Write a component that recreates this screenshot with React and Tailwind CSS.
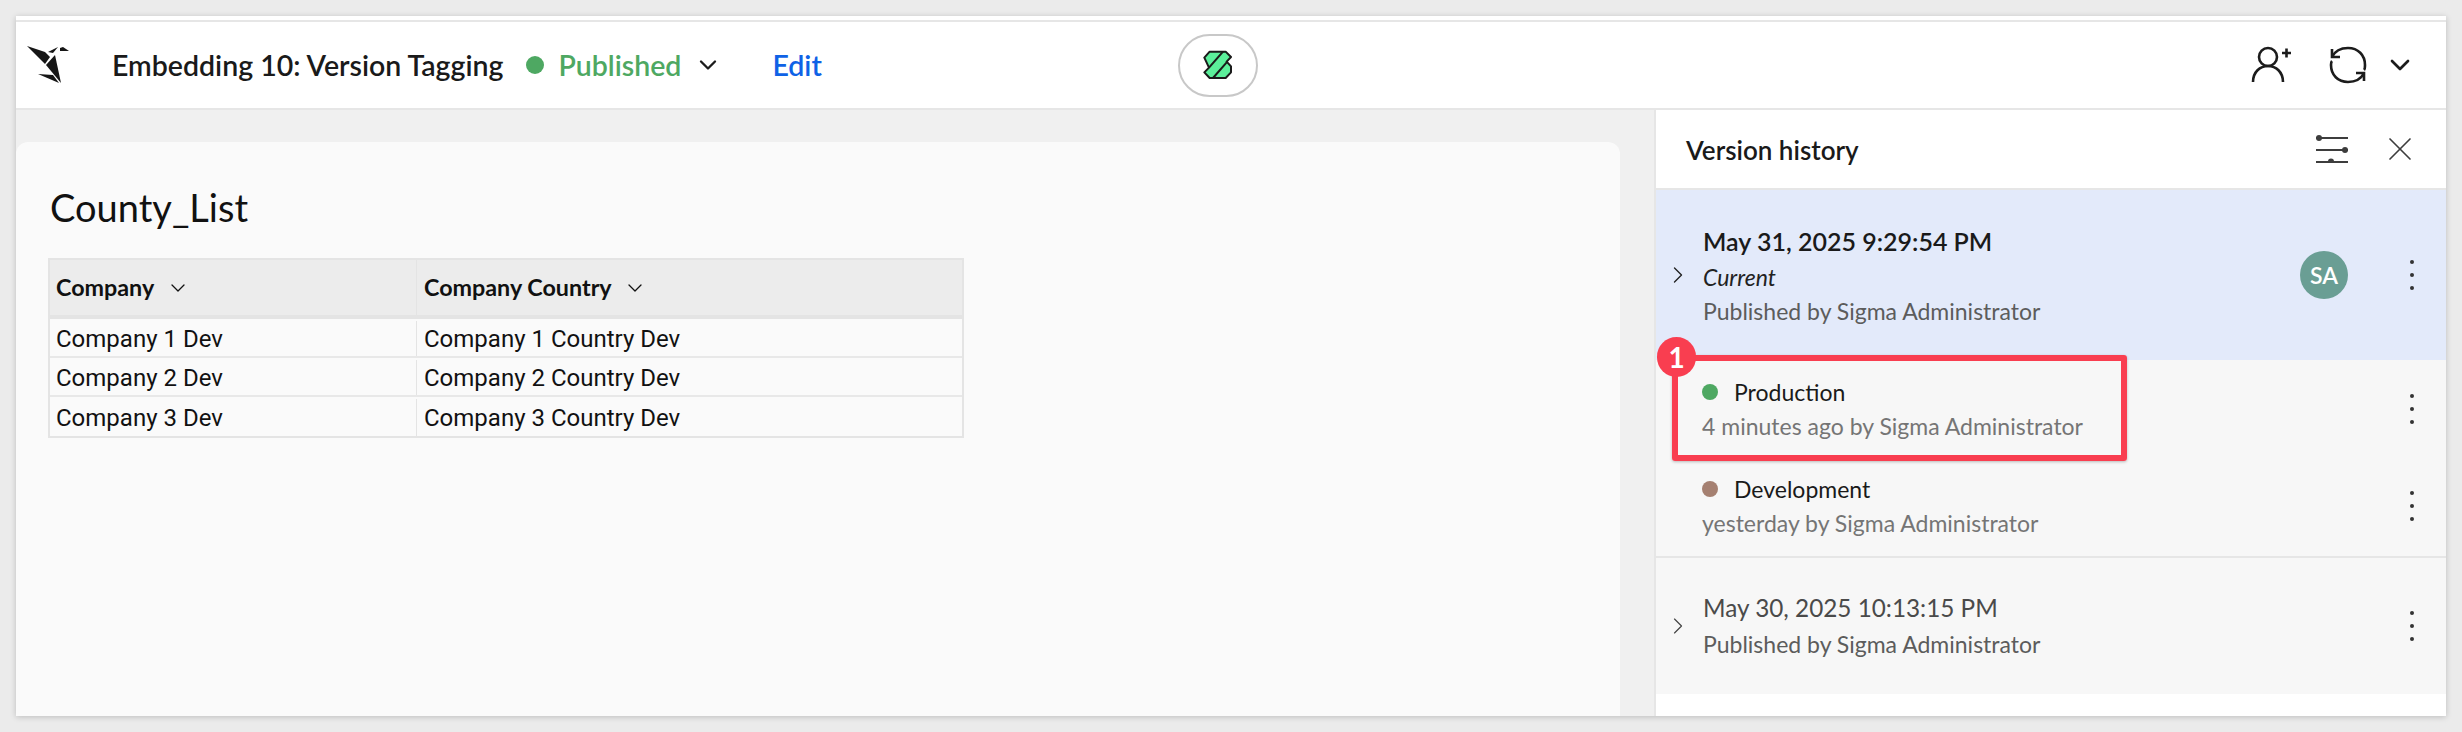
import { ChevronDown, ChevronRight, X } from "lucide-react";

const font = "font-['Lato','Noto_Sans',sans-serif]";

function Logo() {
  return (
    <svg width="48" height="46" viewBox="24 42 48 46" className="shrink-0">
      <g fill="#161616">
        <polygon points="27,46 45,52 50,57 45,64" />
        <polygon points="46,65 55,55 61,83" />
        <polygon points="38,74 53,75 59,83" />
        <polygon points="48,52 58,47 53,53" />
        <polygon points="60,48 63,47 69,51 60,51" />
      </g>
    </svg>
  );
}

function ZigIcon() {
  return (
    <svg width="30" height="32" viewBox="130 92 90 88">
      <polygon
        points="150,96 198,96 214,112 201,126 214,140 214,158 198,175 150,175 134,158 148,144 134,114"
        fill="#5bef9a"
        stroke="#1a1a1a"
        strokeWidth="6"
        strokeLinejoin="round"
      />
      <path d="M190 96 L148 144 M203 126 L160 175" stroke="#1a1a1a" strokeWidth="6" fill="none" />
    </svg>
  );
}

function AddUser() {
  return (
    <svg width="42" height="38" viewBox="0 0 42 38" fill="none" stroke="#1c1c1c" strokeWidth="2.6">
      <circle cx="17" cy="11" r="9" />
      <path d="M2 36 C2 26 9 20 17 20 C25 20 32 26 32 36" />
      <path d="M31 7 H40 M35.500 2.500 V11.500" />
    </svg>
  );
}

function SyncIcon() {
  return (
    <svg width="38" height="38" viewBox="0 0 38 38" fill="none" stroke="#1c1c1c" strokeWidth="2.6">
      <path d="M3 11 C6 5 12 2 19 2 C29 2 36 9 36 19 C36 21 36 23 35 24" />
      <path d="M35 27 C32 33 26 36 19 36 C9 36 2 29 2 19 C2 17 2 16 3 15" />
      <path d="M3 3 V11 H11" />
      <path d="M35 35 V27 H27" />
    </svg>
  );
}

function Sliders() {
  return (
    <svg width="34" height="28" viewBox="0 0 34 28" stroke="#3d3d3d" strokeWidth="2" fill="#3d3d3d">
      <path d="M1 3 H33 M1 15 H33 M1 27 H33" />
      <circle cx="4" cy="3" r="3" stroke="none" />
      <circle cx="30" cy="15" r="3" stroke="none" />
      <circle cx="16" cy="26.500" r="3" stroke="none" />
    </svg>
  );
}

function Dots() {
  return (
    <div className="flex flex-col items-center gap-[9px] w-1 shrink-0">
      <span className="w-1 h-1 rounded-full bg-[#333]" />
      <span className="w-1 h-1 rounded-full bg-[#333]" />
      <span className="w-1 h-1 rounded-full bg-[#333]" />
    </div>
  );
}

function TagRow({ dot, name, sub, className }) {
  return (
    <div className={`flex items-center pl-[46px] pr-[32px] ${className}`}>
      <div className="flex-1">
        <div className="flex items-center h-[34px]">
          <span className={`w-4 h-4 rounded-full ${dot}`} />
          <span className="ml-4 text-[23px] text-[#1a1a1a]">{name}</span>
        </div>
        <div className="text-[23px] leading-[34px] text-[#757575]">{sub}</div>
      </div>
      <Dots />
    </div>
  );
}

const rows = [
  ["Company 1 Dev", "Company 1 Country Dev"],
  ["Company 2 Dev", "Company 2 Country Dev"],
  ["Company 3 Dev", "Company 3 Country Dev"],
];

export default function App() {
  return (
    <div className={`h-[732px] bg-[#ebebeb] p-4 ${font}`}>
      <div className="h-[700px] bg-white flex flex-col shadow-[0_1px_6px_rgba(0,0,0,0.2)] pt-1 overflow-hidden">
        {/* top bar */}
        <div className="h-[90px] shrink-0 border-t-2 border-b-2 border-[#e6e6e6] flex items-center pl-[8px] pr-[30px] relative">
          <Logo />
          <span className="ml-[40px] text-[28.500px] font-semibold text-[#1a1a1a]">Embedding 10: Version Tagging</span>
          <span className="ml-[23px] w-[18px] h-[18px] rounded-full bg-[#4ea862]" />
          <span className="ml-[14px] text-[28.500px] font-semibold text-[#4ea862]">Published</span>
          <ChevronDown size={28} strokeWidth={2} className="ml-[13px] text-[#1c1c1c]" />
          <span className="ml-[50px] text-[28.500px] font-semibold text-[#0f62e6]">Edit</span>
          <div className="ml-[356px] w-[80px] h-[63px] rounded-[32px] border-2 border-[#c8c8c8] flex items-center justify-center">
            <ZigIcon />
          </div>
          <div className="flex-1" />
          <AddUser />
          <div className="ml-[36px]"><SyncIcon /></div>
          <ChevronDown size={32} strokeWidth={2} className="ml-[17px] text-[#1c1c1c]" />
        </div>

        <div className="flex-1 flex min-h-0 bg-[#f0f0f0]">
          {/* canvas */}
          <div className="flex-1 pt-[32px] pr-[34px]">
            <div className="h-full bg-[#fafafa] rounded-t-xl pl-[34px] pt-[41px]">
              <h1 className="text-[38px] leading-[48px] text-[#111] font-normal">County_List</h1>
              <div className="mt-[27px] -ml-[2px] w-[916px] border-2 border-[#e4e4e4]">
                <div className="flex h-[59px] bg-[#ececec] border-b-4 border-[#e4e4e4] text-[23.300px] font-bold text-[#111]">
                  <div className="w-[367px] border-r border-[#e4e4e4] flex items-center pl-[6px]">
                    Company
                    <ChevronDown size={24} strokeWidth={1.3} className="ml-[12px]" />
                  </div>
                  <div className="flex-1 flex items-center pl-[7px]">
                    Company Country
                    <ChevronDown size={24} strokeWidth={1.3} className="ml-[11px]" />
                  </div>
                </div>
                {rows.map((r, i) => (
                  <div key={i} className={`flex h-[39px] pt-[2px] text-[24px] text-[#111] font-['Roboto',sans-serif] ${i < 2 ? "border-b-2 border-[#e8e8e8]" : ""}`}>
                    <div className="w-[367px] border-r border-[#e4e4e4] flex items-center pl-[6px]">{r[0]}</div>
                    <div className="flex-1 flex items-center pl-[7px]">{r[1]}</div>
                  </div>
                ))}
              </div>
            </div>
          </div>

          {/* version history */}
          <div className="w-[792px] shrink-0 border-l-2 border-[#e6e6e6] bg-white flex flex-col relative">
            <div className="h-[80px] shrink-0 border-b-2 border-[#e6e6e6] flex items-center pl-[30px] pr-[26px]">
              <span className="pt-[2px] text-[26px] font-semibold text-[#1a1a1a] flex-1">Version history</span>
              <Sliders />
              <X size={40} strokeWidth={1} className="ml-[31px] text-[#3d3d3d]" />
            </div>

            <div className="h-[170px] shrink-0 bg-[#e3eafa] flex items-center pl-[8px] pr-[32px]">
              <ChevronRight size={28} strokeWidth={1.2} className="text-[#222] shrink-0" />
              <div className="ml-[11px] flex-1">
                <div className="text-[25px] leading-[36px] font-semibold text-[#1a1a1a]">May 31, 2025 9:29:54 PM</div>
                <div className="text-[23px] leading-[36px] italic text-[#222]">Current</div>
                <div className="text-[23px] leading-[32px] text-[#5c5c5c]">Published by Sigma Administrator</div>
              </div>
              <div className="w-[48px] h-[48px] rounded-full bg-[#6a9e94] text-white text-[23px] font-semibold flex items-center justify-center">SA</div>
              <div className="ml-[62px]"><Dots /></div>
            </div>

            <div className="flex-1 bg-[#f7f7f7]">
              <TagRow dot="bg-[#4ea862]" name="Production" sub="4 minutes ago by Sigma Administrator" className="h-[98px]" />
              <TagRow dot="bg-[#a58071]" name="Development" sub="yesterday by Sigma Administrator" className="h-[100px] pb-[2px] border-b-2 border-[#e6e6e6]" />
              <div className="h-[136px] flex items-center pl-[8px] pr-[32px]">
                <ChevronRight size={28} strokeWidth={1} className="text-[#444] shrink-0" />
                <div className="ml-[11px] flex-1">
                  <div className="text-[24.300px] leading-[36px] text-[#4a4a4a]">May 30, 2025 10:13:15 PM</div>
                  <div className="text-[23px] leading-[36px] text-[#5c5c5c]">Published by Sigma Administrator</div>
                </div>
                <Dots />
              </div>
              <div className="h-[22px] bg-white" />
            </div>

            {/* callout */}
            <div className="absolute left-[16px] top-[245px] w-[455px] h-[106px] border-[6px] border-[#f93e50] rounded-[3px] shadow-[0_1px_3px_rgba(0,0,0,0.25)]" />
            <div className="absolute left-[1px] top-[227px] w-[39px] h-[40px] rounded-full bg-[#f93e50] text-white text-[28px] font-bold flex items-center justify-center">1</div>
          </div>
        </div>
      </div>
    </div>
  );
}
